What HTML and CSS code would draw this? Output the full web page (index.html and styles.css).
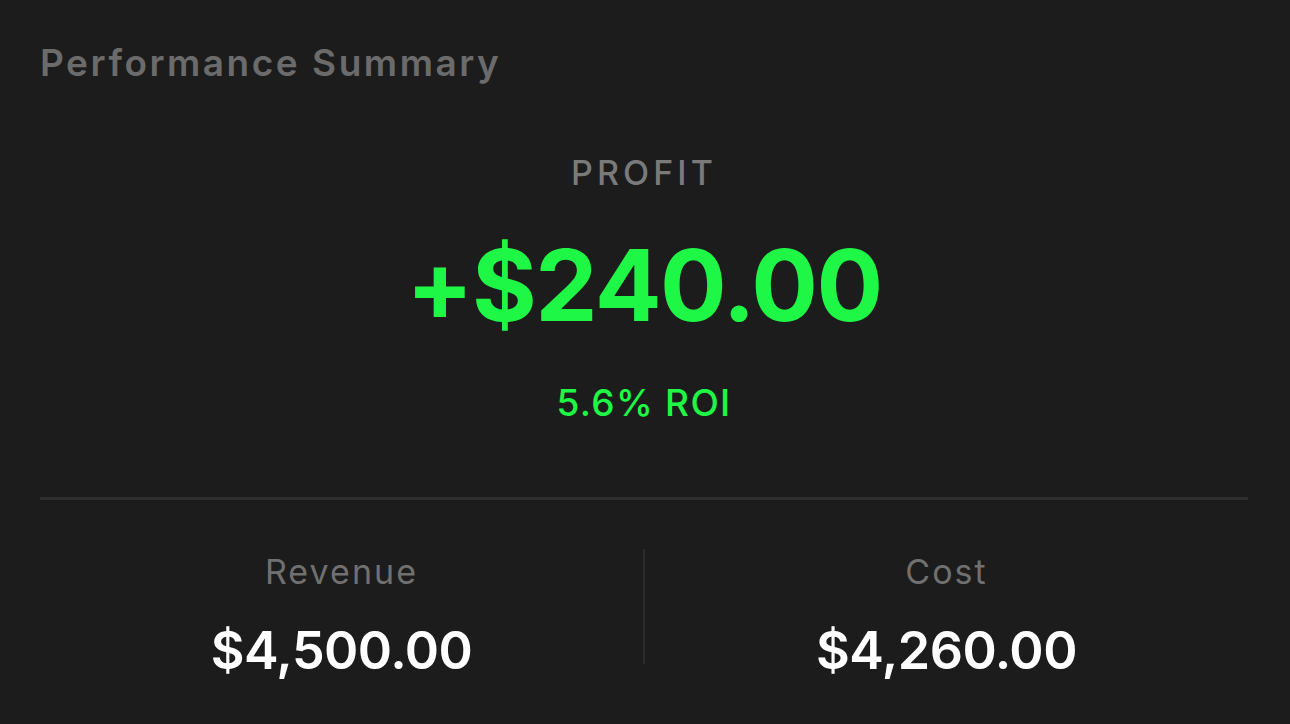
FILE: index.html
```html
<!DOCTYPE html>
<html>
<head>
<meta charset="utf-8">
<link rel="stylesheet" href="styles.css">
</head>
<body>
<div class="card">
  <h1 class="title">Performance Summary</h1>
  <div class="hero">
    <div class="hero-label">PROFIT</div>
    <div class="hero-value">+$240.00</div>
    <div class="hero-roi">5.6% ROI</div>
  </div>
  <div class="divider"></div>
  <div class="stats">
    <div class="stat">
      <div class="stat-label">Revenue</div>
      <div class="stat-value">$4,500.00</div>
    </div>
    <div class="vsep"></div>
    <div class="stat">
      <div class="stat-label">Cost</div>
      <div class="stat-value">$4,260.00</div>
    </div>
  </div>
</div>
</body>
</html>
```
FILE: styles.css
```css
html, body {
  margin: 0;
  padding: 0;
  background: #1c1c1c;
}
body {
  font-family: Inter, "Helvetica Neue", Arial, sans-serif;
  width: 1290px;
  height: 724px;
  overflow: hidden;
}
.card {
  padding: 40px 42px 0 40px;
}
.title {
  margin: 0;
  font-size: 37px;
  line-height: 46px;
  font-weight: 600;
  letter-spacing: 0.068em;
  color: #6b6b6b;
}
.hero {
  display: flex;
  flex-direction: column;
  align-items: center;
  padding-top: 67px;
}
.hero-label {
  font-size: 34px;
  line-height: 40px;
  font-weight: 500;
  letter-spacing: 0.12em;
  color: #7a7a7a;
}
.hero-value {
  margin-top: 37px;
  font-size: 99px;
  line-height: 110px;
  font-weight: 700;
  color: #1ef745;
  letter-spacing: -0.015em;
}
.hero-roi {
  margin-top: 41px;
  font-size: 37px;
  line-height: 44px;
  font-weight: 500;
  letter-spacing: 0.035em;
  color: #1ef745;
}
.divider {
  margin-top: 72px;
  height: 3px;
  background: #2e2e2e;
}
.stats {
  display: grid;
  grid-template-columns: 1fr 2px 1fr;
  margin-top: 49px;
}
.vsep {
  background: #2c2c2c;
  height: 115px;
}
.stat {
  display: flex;
  flex-direction: column;
  align-items: center;
  padding-top: 3px;
}
.stat-label {
  font-size: 34px;
  line-height: 40px;
  font-weight: 400;
  letter-spacing: 0.06em;
  color: #707070;
}
.stat-value {
  margin-top: 29px;
  font-size: 52px;
  line-height: 60px;
  font-weight: 600;
  letter-spacing: -0.01em;
  color: #ffffff;
}
```
